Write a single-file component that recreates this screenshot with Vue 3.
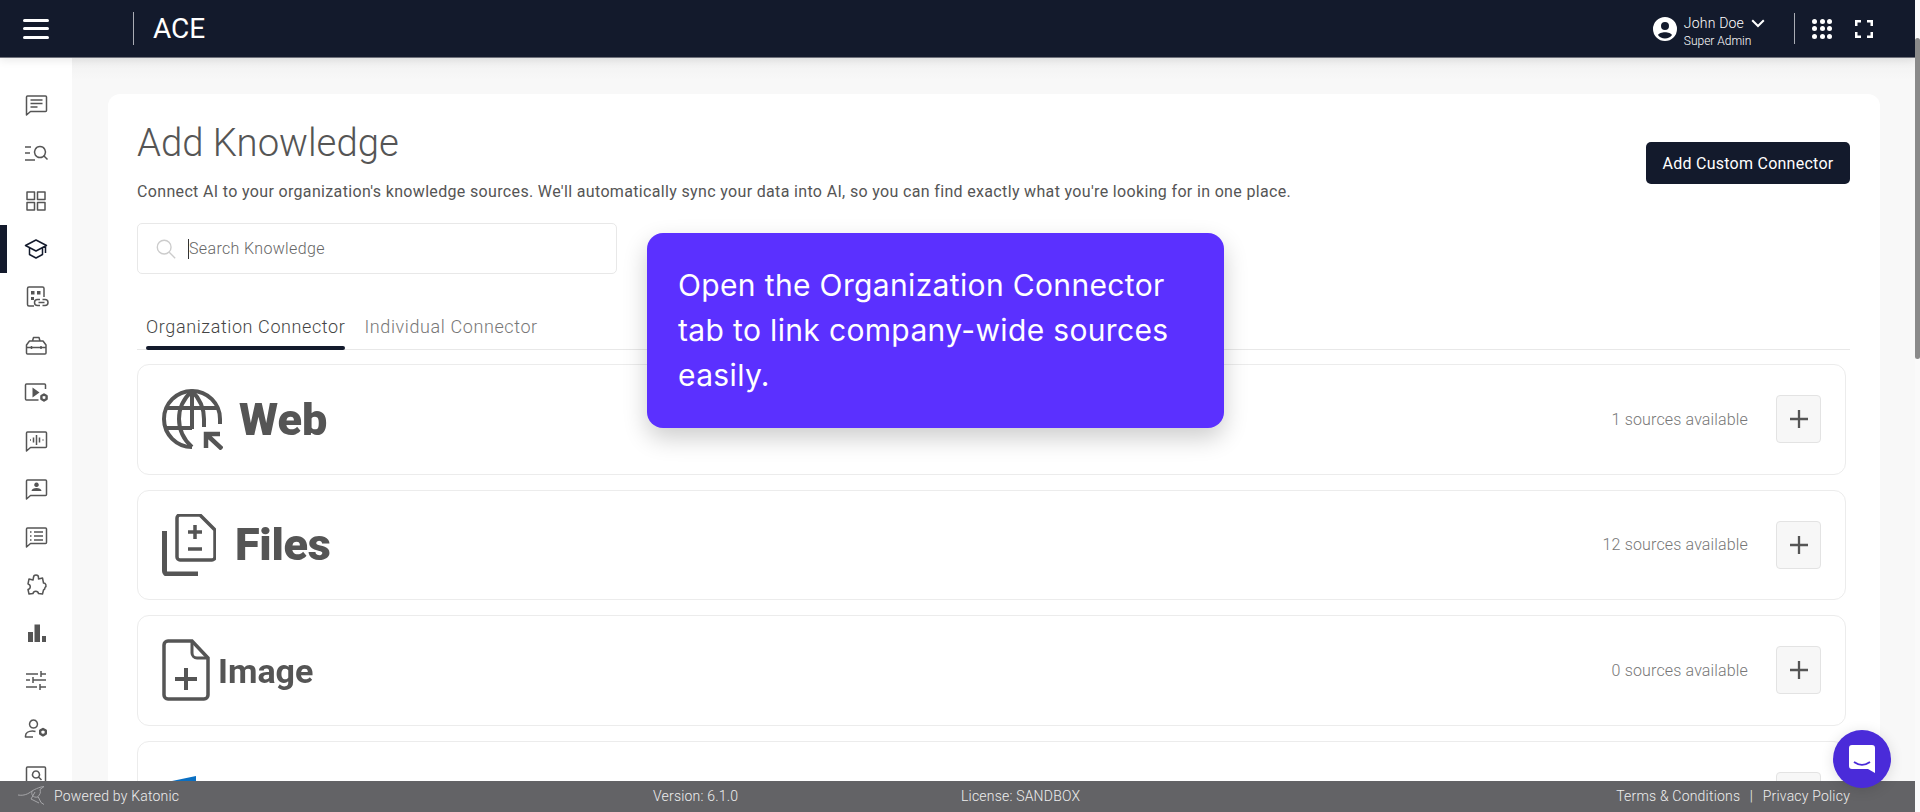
<script setup>
const nav = [
  { s: 'M3.5 3h18a1 1 0 0 1 1 1v13.5a1 1 0 0 1-1 1H6.5L2.5 22V4a1 1 0 0 1 1-1zM6.5 7h12M6.5 10.5h12M6.5 14h7' },
  { s: 'M1 6h6M1 12h5M1 19h10', c: 'M16 5.500a5.500 5.500 0 1 1-.01 0zM20 15l3.500 3.500' },
  { s: 'M3 3h7.5v7.5H3zM13.5 3H21v7.5h-7.5zM3 13.5h7.5V21H3zM13.5 13.5H21V21h-7.5z' },
  { s: 'M12 3 1.5 8.500 12 14l10.500-5.500zM5.500 11v6.500L12 21l6.500-3.500V11M21.500 9v7', active: true },
  { s: 'M10 21H5a1.500 1.500 0 0 1-1.500-1.500v-16A1.500 1.500 0 0 1 5 2h13.500A1.500 1.500 0 0 1 20 3.500V12M16 14.500h-2.500a3 3 0 0 0 0 6H16M18.500 14.500H21a3 3 0 0 1 0 6h-2.500M14.500 17.500h6', f: 'M7 6h3.500v3.500H7zM13 6h3.500v3.500H13zM7 12h3v3H7z' },
  { s: 'M2.500 12 5.500 8h13.500l3 4v8a1 1 0 0 1-1 1H3.500a1 1 0 0 1-1-1zM8.500 8l1-3.500h5.500l1 3.500M2.500 14.500h19.500M7.500 13v3M17 13v3' },
  { s: 'M21.500 8V4a1 1 0 0 0-1-1H2.500a1 1 0 0 0-1 1v14a1 1 0 0 0 1 1h12', g: 'M20 13.500l2.600 1.500v3L20 19.500 17.400 18v-3z', f: 'M8.500 6.500l7 5-7 5z' },
  { s: 'M3.5 3h18a1 1 0 0 1 1 1v13.5a1 1 0 0 1-1 1H6.5L2.5 22V4a1 1 0 0 1 1-1zM6 11h1M9.500 8.500v5M12.500 6v10M15.500 8.500v5M18.500 11h1' },
  { s: 'M3.5 3h18a1 1 0 0 1 1 1v13.5a1 1 0 0 1-1 1H6.5L2.5 22V4a1 1 0 0 1 1-1z', f: 'M12.500 5.500a2.300 2.300 0 1 1-.01 0zM7.500 14c0-2 2.500-3 5-3s5 1 5 3z' },
  { s: 'M3.5 3h18a1 1 0 0 1 1 1v13.5a1 1 0 0 1-1 1H6.5L2.5 22V4a1 1 0 0 1 1-1zM10 7h9M10 11h9M10 15h9M6 7h1.500M6 11h1.500M6 15h1.500' },
  { s: 'M9.500 4.500a2.500 2.500 0 0 1 5 0V6l4 -1 1 5a2.500 2.500 0 0 1 1.500 4.500 2.500 2.500 0 0 1-1.500 2.500l-1 4-4-.500a2.800 2.800 0 0 0-5.500 0l-4 .500-1-4.500a2.800 2.800 0 0 0 0-5.500l1-5 4 1z' },
  { f: 'M4 11h5v10H4zM10.500 3.500h5.500V21h-5.500zM18 15h4v6h-4z' },
  { s: 'M2 5h12M17 5h5M17 2v6M2 11h4M9 11h13M9 8v6M2 18h11M16 18h6M16 15v6' },
  { s: 'M9.500 3a4 4 0 1 1-.01 0zM9 20H1.500v-1c0-3 3-5 7-5 1 0 2 .2 3 .5', g: 'M19 12l2.800 1.600v3.200L19 18.400l-2.800-1.600v-3.200z' },
  { s: 'M3.500 2h17a1 1 0 0 1 1 1v15a1 1 0 0 1-1 1h-17a1 1 0 0 1-1-1V3a1 1 0 0 1 1-1zM12 6a3.500 3.500 0 1 1-.01 0zM14.500 12l3 3' }
]
const rows = [
  { id: 'web', label: 'Web', count: '1 sources available' },
  { id: 'files', label: 'Files', count: '12 sources available' },
  { id: 'image', label: 'Image', count: '0 sources available' },
  { id: 'other', label: '', count: '' }
]
</script>

<template>
  <div class="app">
    <div class="page">
      <header class="topbar">
        <button class="burger" aria-label="Menu"><span></span><span></span><span></span></button>
        <div class="brand">ACE</div>
        <div class="user">
          <svg class="avatar" viewBox="0 0 24 24"><path fill="#fff" d="M12 0a12 12 0 1 0 0 24 12 12 0 0 0 0-24zm0 5a4 4 0 1 1 0 8 4 4 0 0 1 0-8zm0 16.500c-3 0-5.600-1.300-7-3.400.5-1.800 4-2.900 7-2.900s6.500 1.100 7 2.900c-1.400 2.100-4 3.400-7 3.400z"/></svg>
          <div class="user-text">
            <div class="user-name">John Doe
              <svg class="chev" viewBox="0 0 14 9"><path d="M1.200 1.200 7 7l5.800-5.800" fill="none" stroke="#fff" stroke-width="2"/></svg>
            </div>
            <div class="user-role">Super Admin</div>
          </div>
        </div>
        <div class="top-div"></div>
        <div class="dots"><i v-for="n in 9" :key="n"></i></div>
        <svg class="full" viewBox="0 0 18 18"><path d="M1.250 6V1.250H6M12 1.250h4.750V6M16.750 12v4.750H12M6 16.750H1.250V12" fill="none" stroke="#fff" stroke-width="2.500"/></svg>
      </header>

      <div class="body">
        <aside class="side">
          <div v-for="(n, i) in nav" :key="i" class="nav-item" :class="{ on: n.active }">
            <svg viewBox="0 0 25 24" class="nav-ico">
              <path v-if="n.s" :d="n.s" fill="none" stroke-width="1.500" stroke-linejoin="round" />
              <path v-if="n.c" :d="n.c" fill="none" stroke-width="1.500" />
              <path v-if="n.g" :d="n.g" fill="none" stroke-width="2.400" stroke-linejoin="round" />
              <path v-if="n.f" :d="n.f" class="filled" />
            </svg>
          </div>
        </aside>

        <main class="main">
          <section class="card">
            <div class="head">
              <div>
                <h1>Add Knowledge</h1>
                <p class="sub">Connect AI to your organization's knowledge sources. We'll automatically sync your data into AI, so you can find exactly what you're looking for in one place.</p>
              </div>
              <button class="cta">Add Custom Connector</button>
            </div>
            <div class="search">
              <svg viewBox="0 0 24 24" class="search-ico"><circle cx="10" cy="10" r="7.500" fill="none" stroke="#ccc" stroke-width="1.500"/><path d="m15.500 15.500 6.500 6.500" stroke="#ccc" stroke-width="1.500"/></svg>
              <span class="caret"></span><span class="ph">Search Knowledge</span>
            </div>
            <div class="tabs">
              <div class="tab active">Organization Connector</div>
              <div class="tab">Individual Connector</div>
            </div>
            <div class="rows">
              <div v-for="r in rows" :key="r.id" class="row">
                <div class="logo" :class="'logo-' + r.id">
                  <svg v-if="r.id === 'web'" class="lg" width="61" height="61" viewBox="0 0 61 61" fill="none" stroke="#555" stroke-width="4">
                    <path d="M30 58A28 28 0 1 1 58 30v5"/>
                    <path d="M30 2C21 10 17 20 17 30s4 20 13 28M30 2C38 10 42 20 42 30v8M30 2v38M5 19h50M3 39h27"/>
                    <path d="M44 59V45h14M45 46l15 14" stroke-width="4.500"/>
                  </svg>
                  <svg v-else-if="r.id === 'files'" class="lg" width="54" height="62" viewBox="0 0 54 62" fill="none" stroke="#555">
                    <path d="M15 4a3 3 0 0 1 3-3h20l15 15v27a3 3 0 0 1-3 3H18a3 3 0 0 1-3-3z" stroke-width="3.500"/>
                    <path d="M33 11v14M26 18h14M26 35h14" stroke-width="3.500"/>
                    <path d="M2.500 17v40a3 3 0 0 0 3 3H36" stroke-width="5"/>
                  </svg>
                  <svg v-else-if="r.id === 'image'" class="lg" width="48" height="62" viewBox="0 0 48 62" fill="none" stroke="#555" stroke-width="3.500">
                    <path d="M2 6a4 4 0 0 1 4-4h24l16 17v37a4 4 0 0 1-4 4H6a4 4 0 0 1-4-4z"/>
                    <path d="M30 3v11a5 5 0 0 0 5 5h10" stroke-width="3"/>
                    <path d="M24 29v22M13 40h22" stroke-width="4"/>
                  </svg>
                  <svg v-else class="lg" width="26" height="6" viewBox="0 0 26 6"><path d="M0 5 24 0v6H0z" fill="#0a6fc2"/></svg>
                  <span v-if="r.label" class="logo-text">{{ r.label }}</span>
                </div>
                <span class="count">{{ r.count }}</span>
                <button class="plus" aria-label="Add"><svg viewBox="0 0 18 18" width="18" height="18"><path d="M9 0v18M0 9h18" stroke="#555" stroke-width="2.300"/></svg></button>
              </div>
            </div>
          </section>
        </main>
      </div>

      <footer class="foot">
        <svg class="roo" viewBox="0 0 30 20" fill="none" stroke="#a5a5a8" stroke-width="1"><path d="M0 9c6 1 10-1 14-4 3-2 6-3 9-4l3-.5-4 3c1 3 0 5-2 7l3 6 3 2M14 5c-1 4 1 7 6 6M17 6l-4 7 8 4"/></svg>
        <span class="f-pow">Powered by Katonic</span>
        <span class="f-ver">Version: 6.1.0</span>
        <span class="f-lic">License: SANDBOX</span>
        <span class="f-links">Terms &amp; Conditions <b>|</b> Privacy Policy</span>
      </footer>

      <div class="tip">Open the Organization Connector tab to link company-wide sources easily.</div>
      <button class="chat" aria-label="Chat">
        <svg viewBox="0 0 26 28" width="26" height="28"><path d="M3 0h20a3 3 0 0 1 3 3v25l-7-4H3a3 3 0 0 1-3-3V3a3 3 0 0 1 3-3z" fill="#fff"/><path d="M5 17c5 3.500 11 3.500 16 0" fill="none" stroke="#4a2bd9" stroke-width="1.800"/></svg>
      </button>
    </div>
    <div class="scroll"><div class="thumb"></div></div>
  </div>
</template>

<style>
html, body { margin: 0; overflow: hidden; background: #f8f8f8; }
</style>

<style scoped>
* { box-sizing: border-box; }
.app { display: flex; height: 812px; overflow: hidden; font-family: Roboto, "Liberation Sans", sans-serif; }
.page { position: relative; flex: 1; min-width: 0; display: flex; flex-direction: column; overflow: hidden; }
.scroll { width: 5px; background: #fafafa; padding-top: 38px; }
.thumb { width: 5px; height: 321px; background: #8a8a8a; border-radius: 3px; }

.topbar { height: 58px; flex: none; display: flex; align-items: center; background: #131a2c; color: #fff; border-bottom: 1px solid #70727c; box-shadow: 0 3px 8px rgba(0,0,0,.08); position: relative; z-index: 2; }
.burger { width: 26px; height: 20px; margin-left: 23px; padding: 0; background: none; border: 0; display: flex; flex-direction: column; justify-content: space-between; }
.burger span { display: block; height: 3px; border-radius: 2px; background: #fff; }
.brand { margin-left: 84px; height: 33px; padding-left: 19px; border-left: 1px solid #a9acb4; font-size: 28px; line-height: 33px; }
.user { margin-left: auto; display: flex; align-items: center; padding-top: 5px; }
.avatar { width: 24px; height: 24px; margin: -5px 7px 0 -1px; }
.user-name { font-size: 14px; font-weight: 300; line-height: 18px; display: flex; align-items: center; letter-spacing: .2px; }
.chev { width: 14px; height: 9px; margin-left: 7px; }
.user-role { font-size: 12px; font-weight: 300; line-height: 14px; margin-top: 2px; }
.top-div { width: 1px; height: 31px; background: #a9acb4; margin: 0 17px 0 29px; }
.dots { width: 20px; display: grid; grid-template-columns: repeat(3, 5px); gap: 2.500px; }
.dots i { width: 5px; height: 5px; border-radius: 50%; background: #fff; }
.full { width: 18px; height: 18px; margin: 0 42px 0 23px; }

.body { flex: 1; display: flex; min-height: 0; }
.side { width: 72px; flex: none; background: #fff; padding-top: 23px; }
.nav-item { height: 48px; display: flex; align-items: center; padding-left: 24px; position: relative; }
.nav-ico { width: 25px; height: 24px; stroke: #555; }
.nav-ico .filled { fill: #555; stroke: none; }
.nav-item.on .nav-ico { stroke: #131a2c; }
.nav-item.on::before { content: ""; position: absolute; left: 0; top: 0; width: 7px; height: 48px; background: #131a2c; }

.main { flex: 1; min-width: 0; padding: 36px 35px 0 36px; background: linear-gradient(#f1f1f1, #f8f8f8 22px); }
.card { background: #fff; border-radius: 12px; padding: 26px 30px 0 29px; height: 760px; }
.head { display: flex; justify-content: space-between; height: 103px; }
h1 { margin: 0; font-size: 38.300px; font-weight: 300; line-height: 46px; color: #555; }
.sub { margin: 16px 0 0; font-size: 16px; line-height: 20px; color: #555; letter-spacing: .34px; }
.cta { margin-top: 22px; width: 204px; height: 42px; border: 0; border-radius: 5px; background: #131a2c; color: #fff; font: 400 16px Roboto, sans-serif; letter-spacing: .25px; }
.search { width: 480px; height: 51px; border: 1px solid #e8e8e8; border-radius: 5px; display: flex; align-items: center; padding-left: 17px; }
.search-ico { width: 22px; height: 22px; margin-right: 11px; }
.caret { width: 1px; height: 20px; background: #333; }
.ph { font-size: 16px; font-weight: 300; color: #666; letter-spacing: .35px; margin-top: -1px; }
.tabs { display: flex; margin-top: 31px; height: 45px; border-bottom: 1px solid #e8e8e8; padding-left: 9px; width: 100%; }
.tab { font-size: 18px; font-weight: 300; line-height: 43px; color: #777; height: 45px; margin-right: 19px; letter-spacing: .6px; }
.tab.active { color: #444; position: relative; }
.tab.active::after { content: ""; position: absolute; left: 0; right: 0; top: 41px; height: 4px; border-radius: 2px; background: #131a2c; }
.rows { margin: 14px 4px 0 0; display: flex; flex-direction: column; gap: 15px; }
.row { height: 110.500px; flex: none; border: 1px solid #ececec; border-radius: 12px; display: flex; align-items: center; padding: 0 24px 0 24px; }
.logo { display: flex; align-items: center; color: #555; margin-right: auto; }
.logo-text { font-weight: 900; font-size: 44px; letter-spacing: -.3px; filter: blur(.5px); }
.logo-web .logo-text { margin-left: 16px; letter-spacing: 0; font-size: 45px; }
.logo-files .logo-text { margin-left: 19px; font-size: 45px; }
.logo-image .logo-text { font-size: 34px; font-weight: 700; margin: 2px 0 0 8px; letter-spacing: 0; }
.logo-other { align-self: flex-start; margin-top: 34px; }
.logo-other .lg { margin-left: 10px; }
.count { font-size: 16px; font-weight: 300; color: #777; margin-right: 28px; letter-spacing: .15px; }
.plus { width: 45px; height: 48px; border: 1px solid #e3e3e3; border-radius: 4px; background: #f7f7f7; display: flex; align-items: center; justify-content: center; padding: 0; }

.foot { position: absolute; left: 0; right: 0; bottom: 0; height: 31px; padding-bottom: 1px; background: #636366; color: #eee; display: flex; align-items: center; font-size: 14px; font-weight: 300; letter-spacing: .2px; z-index: 3; }
.roo { width: 30px; height: 20px; margin-left: 18px; margin-right: 6px; }
.f-pow { width: 599px; }
.f-ver { width: 308px; }
.f-lic { flex: 1; }
.f-links { margin-right: 65px; }
.f-links b { font-weight: 300; margin: 0 6px; }

.tip { position: absolute; left: 647px; top: 233px; width: 577px; height: 195px; padding: 30px 31px; background: #5b30ff; color: #fff; border-radius: 16px; font: 400 30px/45px Inter, sans-serif; letter-spacing: .35px; box-shadow: 0 10px 25px rgba(0,0,0,.2); z-index: 4; }
.chat { position: absolute; left: 1833px; top: 730px; width: 58px; height: 58px; border-radius: 50%; border: 0; background: #4a2bd9; display: flex; align-items: center; justify-content: center; padding: 0; box-shadow: 0 2px 14px rgba(0,0,0,.12); z-index: 5; }
</style>
